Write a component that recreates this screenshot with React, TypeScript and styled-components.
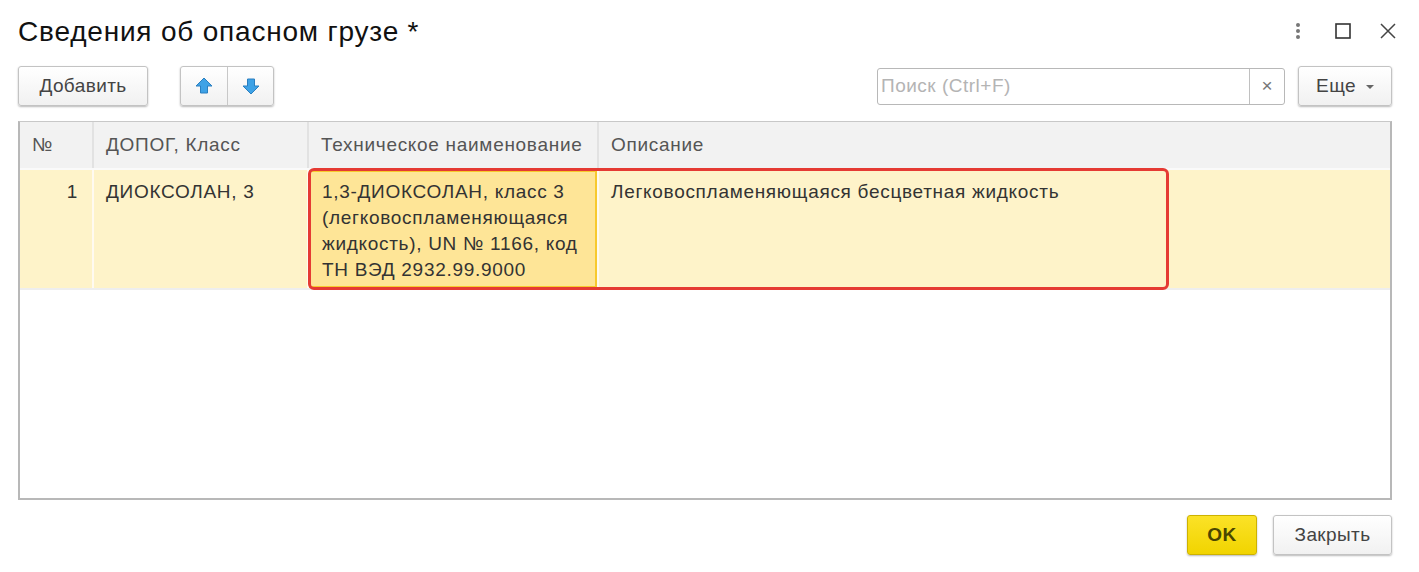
import React from "react";
import styled, { createGlobalStyle } from "styled-components";

const Global = createGlobalStyle`
  html, body { margin: 0; padding: 0; background: #fff; }
  body { font-family: Arial, "Liberation Sans", sans-serif; }
  * { box-sizing: border-box; }
`;

const Window = styled.div`
  width: 1419px;
  height: 572px;
  padding: 0 27px 0 18px;
  display: flex;
  flex-direction: column;
  background: #fff;
`;

const TitleBar = styled.div`
  height: 62px;
  display: flex;
  align-items: center;
  justify-content: space-between;
  margin-right: -8px;
`;

const Title = styled.h1`
  margin: 0;
  padding-top: 2px;
  font-family: Arial, "Liberation Sans", sans-serif;
  font-weight: normal;
  font-size: 28px;
  letter-spacing: 0.8px;
  color: #111;
`;

const WinIcons = styled.div`
  display: flex;
  align-items: center;
  gap: 25px;
  margin-right: 2px;
`;

const IconBtn = styled.span`
  width: 20px;
  height: 20px;
  display: flex;
  align-items: center;
  justify-content: center;
`;

const Toolbar = styled.div`
  margin-top: 4px;
  height: 40px;
  display: flex;
  align-items: center;
`;

const Button = styled.button<{ $w?: number }>`
  height: 40px;
  ${(p) => (p.$w ? `width: ${p.$w}px;` : "")}
  padding: 0 10px;
  border: 1px solid #c3c3c3;
  border-radius: 3px;
  background: linear-gradient(#ffffff, #f1f1f1);
  box-shadow: 0 1px 2px rgba(0, 0, 0, 0.28);
  font-family: Arial, "Liberation Sans", sans-serif;
  font-size: 19px;
  letter-spacing: 0.4px;
  color: #444;
  display: flex;
  align-items: center;
  justify-content: center;
  gap: 10px;
  cursor: pointer;
`;

const Group = styled.div`
  margin-left: 32px;
  height: 40px;
  display: flex;
  border: 1px solid #c3c3c3;
  border-radius: 3px;
  background: linear-gradient(#ffffff, #f1f1f1);
  box-shadow: 0 1px 2px rgba(0, 0, 0, 0.28);
`;

const GroupItem = styled.span<{ $last?: boolean }>`
  width: ${(p) => (p.$last ? 45 : 47)}px;
  display: flex;
  align-items: center;
  justify-content: center;
  ${(p) => (p.$last ? "" : "border-right: 1px solid #c8c8c8;")}
`;

const Spacer = styled.div`
  flex: 1;
`;

const Search = styled.div`
  width: 408px;
  height: 37px;
  display: flex;
  border: 1px solid #b8b8b8;
  border-radius: 3px;
  background: #fff;
  margin-right: 13px;
`;

const SearchInput = styled.input`
  flex: 1;
  min-width: 0;
  border: none;
  outline: none;
  padding: 0 3px;
  font-family: Arial, "Liberation Sans", sans-serif;
  font-size: 19px;
  letter-spacing: 0.5px;
  color: #333;
  background: transparent;
  &::placeholder { color: #b4b4b4; }
`;

const Clear = styled.span`
  width: 35px;
  border-left: 1px solid #c0c0c0;
  display: flex;
  align-items: center;
  justify-content: center;
  color: #777;
  font-size: 19px;
`;

const Caret = styled.span`
  width: 0;
  height: 0;
  border-left: 4px solid transparent;
  border-right: 4px solid transparent;
  border-top: 4px solid #666;
  margin-top: 2px;
`;

const Table = styled.div`
  margin-top: 15px;
  height: 379px;
  border-style: solid;
  border-width: 1px 2px 2px 2px;
  border-color: #c8c8c8 #b8b8b8 #b8b8b8 #b8b8b8;
  background: #fff;
  display: flex;
  flex-direction: column;
`;

const cols = "74px 215px 290px 1fr";

const HeaderRow = styled.div`
  display: grid;
  grid-template-columns: ${cols};
  height: 48px;
  background: #f2f2f2;
  border-bottom: 2px solid #fafafa;
`;

const HeadCell = styled.div<{ $last?: boolean }>`
  display: flex;
  align-items: center;
  padding: 0 12px;
  font-size: 19px;
  letter-spacing: 0.7px;
  color: #555;
  ${(p) => (p.$last ? "" : "border-right: 2px solid #e2e2e2;")}
`;

const Row = styled.div`
  position: relative;
  display: grid;
  grid-template-columns: ${cols};
  height: 120px;
  background: #fef3c9;
  border-bottom: 2px solid #eeeeee;
`;

const Cell = styled.div<{ $right?: boolean; $selected?: boolean; $last?: boolean }>`
  padding: 9px 12px 0 12px;
  font-size: 19px;
  letter-spacing: 0.7px;
  line-height: 26px;
  color: #333;
  ${(p) => (p.$right ? "text-align: right; padding-right: 14px;" : "")}
  ${(p) => (p.$last ? "" : "border-right: 2px solid #fffaf0;")}
  ${(p) =>
    p.$selected
      ? `background: #fee597; box-shadow: inset 0 0 0 2px #f7c92d; padding-left: 13px; padding-right: 6px;`
      : ""}
`;

const Highlight = styled.div`
  position: absolute;
  left: 288px;
  top: -2px;
  width: 861px;
  height: 122px;
  border: 3px solid #e53a33;
  border-radius: 6px;
  pointer-events: none;
`;

const Footer = styled.div`
  margin-top: 15px;
  display: flex;
  justify-content: flex-end;
  gap: 16px;
`;

const OkButton = styled(Button)`
  background: linear-gradient(#fbe227, #f1d400);
  border-color: #cdb200;
  color: #4a4600;
  font-size: 19px;
  font-weight: bold;
`;

const ArrowUp = () => (
  <svg width="20" height="20" viewBox="0 0 20 20">
    <path d="M10 2 L18 10 L13.5 10 L13.5 17 L6.5 17 L6.5 10 L2 10 Z" fill="#3ea2e6" stroke="#2a7fc0" strokeWidth="1" strokeLinejoin="round" />
  </svg>
);

const ArrowDown = () => (
  <svg width="20" height="20" viewBox="0 0 20 20">
    <path d="M10 18 L18 10 L13.5 10 L13.5 3 L6.5 3 L6.5 10 L2 10 Z" fill="#3ea2e6" stroke="#2a7fc0" strokeWidth="1" strokeLinejoin="round" />
  </svg>
);

export default function App() {
  return (
    <>
      <Global />
      <Window>
        <TitleBar>
          <Title>Сведения об опасном грузе *</Title>
          <WinIcons>
            <IconBtn>
              <svg width="6" height="18" viewBox="0 0 6 18">
                <circle cx="3" cy="3" r="2" fill="#777" />
                <circle cx="3" cy="9" r="2" fill="#777" />
                <circle cx="3" cy="15" r="2" fill="#777" />
              </svg>
            </IconBtn>
            <IconBtn>
              <svg width="16" height="16" viewBox="0 0 16 16">
                <rect x="1" y="1" width="14" height="14" fill="none" stroke="#333" strokeWidth="1.6" />
              </svg>
            </IconBtn>
            <IconBtn>
              <svg width="18" height="18" viewBox="0 0 18 18">
                <path d="M2 2 L16 16 M16 2 L2 16" stroke="#444" strokeWidth="1.5" />
              </svg>
            </IconBtn>
          </WinIcons>
        </TitleBar>

        <Toolbar>
          <Button $w={130}>Добавить</Button>
          <Group>
            <GroupItem><ArrowUp /></GroupItem>
            <GroupItem $last><ArrowDown /></GroupItem>
          </Group>
          <Spacer />
          <Search>
            <SearchInput placeholder="Поиск (Ctrl+F)" />
            <Clear>×</Clear>
          </Search>
          <Button $w={94}>
            Еще <Caret />
          </Button>
        </Toolbar>

        <Table>
          <HeaderRow>
            <HeadCell>№</HeadCell>
            <HeadCell>ДОПОГ, Класс</HeadCell>
            <HeadCell>Техническое наименование</HeadCell>
            <HeadCell $last>Описание</HeadCell>
          </HeaderRow>
          <Row>
            <Cell $right>1</Cell>
            <Cell>ДИОКСОЛАН, 3</Cell>
            <Cell $selected>
              1,3-ДИОКСОЛАН, класс 3 (легковоспламеняющаяся жидкость), UN № 1166, код ТН ВЭД 2932.99.9000
            </Cell>
            <Cell $last>Легковоспламеняющаяся бесцветная жидкость</Cell>
            <Highlight />
          </Row>
        </Table>

        <Footer>
          <OkButton $w={70}>OK</OkButton>
          <Button $w={119}>Закрыть</Button>
        </Footer>
      </Window>
    </>
  );
}
